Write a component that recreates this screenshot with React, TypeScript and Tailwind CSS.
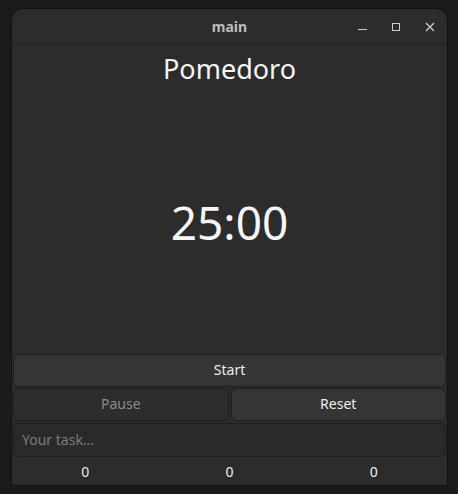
export default function App() {
  return (
    <div
      className="h-[494px] w-[458px] bg-[#1b1b1b] pl-[11px] pr-[10px] pt-2"
      style={{ fontFamily: '"Noto Sans", "DejaVu Sans", sans-serif' }}
    >
      <div className="flex h-[478px] flex-col overflow-hidden rounded-t-[12px] border border-[#111111] bg-[#2c2c2c]">
        {/* Title bar */}
        <div className="relative flex h-[36px] shrink-0 items-center justify-center border-b border-[#1f1f1f]">
          <span className="text-[14px] font-bold text-[#bdbdbd]">main</span>
          <div className="absolute right-0 top-0 flex h-full items-center">
            <div className="flex h-full w-[34px] items-center justify-center">
              <div className="mt-[6px] h-[1px] w-[9px] bg-[#cfcfcf]" />
            </div>
            <div className="flex h-full w-[34px] items-center justify-center">
              <div className="h-[8px] w-[8px] border border-[#cfcfcf]" />
            </div>
            <div className="flex h-full w-[34px] items-center justify-center">
              <svg width="10" height="10" viewBox="0 0 10 10">
                <path d="M1 1 L9 9 M9 1 L1 9" stroke="#cfcfcf" strokeWidth="1.2" />
              </svg>
            </div>
          </div>
        </div>

        {/* Content */}
        <div className="flex flex-1 flex-col px-[1px]">
          <div className="pt-[6px] text-center text-[27px] leading-[36px] text-[#f5f5f5]">
            Pomedoro
          </div>
          <div className="flex flex-1 items-center justify-center pt-[4px] text-[46px] text-[#f5f5f5]">
            25:00
          </div>
          <div className="flex flex-col gap-[1px]">
            <button className="h-[33px] rounded-[6px] border border-[#1e1e1e] bg-[#353535] pb-[2px] text-[14px] text-[#eeeeee]">
              Start
            </button>
            <div className="flex gap-[2px]">
              <button className="h-[33px] flex-1 rounded-[6px] border border-[#1e1e1e] bg-[#2d2d2d] pb-[2px] text-[14px] text-[#8b8b8b]">
                Pause
              </button>
              <button className="h-[33px] flex-1 rounded-[6px] border border-[#1e1e1e] bg-[#353535] pb-[2px] text-[14px] text-[#eeeeee]">
                Reset
              </button>
            </div>
          </div>
          <div className="mt-[2px] flex h-[34px] items-center rounded-[6px] border border-[#1e1e1e] bg-[#2a2a2a] px-[8px] pb-[2px] text-[14px] text-[#7c7c7c]">
            Your task...
          </div>
          <div className="grid h-[28px] grid-cols-3 items-center text-center text-[14px] text-[#eeeeee]">
            <span>0</span>
            <span>0</span>
            <span>0</span>
          </div>
        </div>
      </div>
    </div>
  );
}
